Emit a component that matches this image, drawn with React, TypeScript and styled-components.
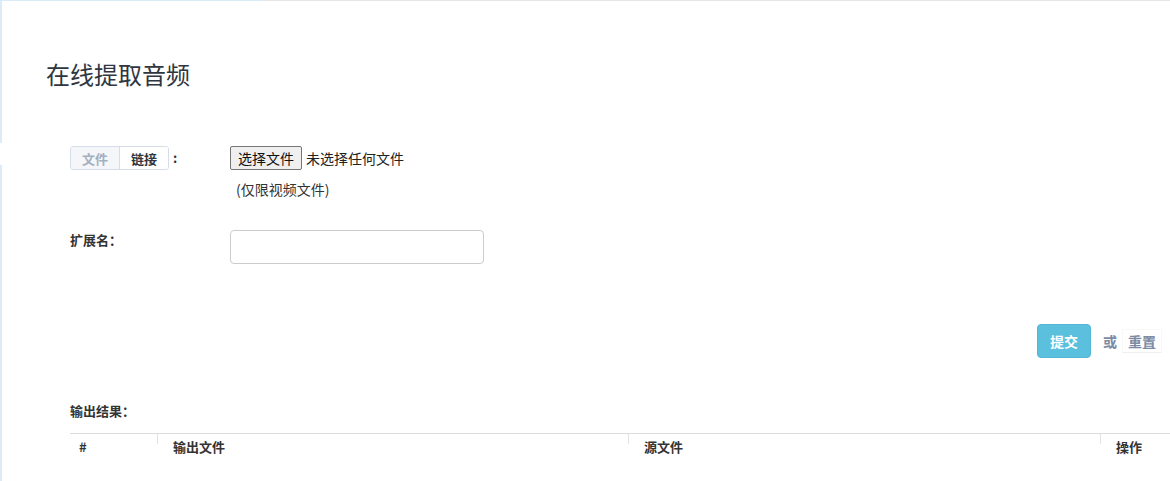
import React, { useState } from 'react';
import styled, { createGlobalStyle } from 'styled-components';

const FONT = `"Microsoft YaHei", "Noto Sans CJK SC", "Noto Sans", sans-serif`;
const TEXT = '#333';
const MUTED = '#7b8ba3';
const LINE = '#dddddd';

const GlobalStyle = createGlobalStyle`
  html, body {
    margin: 0;
    padding: 0;
    background: #fff;
    font-family: ${FONT};
    font-size: 13px;
    color: ${TEXT};
  }
`;

const Page = styled.div`
  box-sizing: border-box;
  width: 1170px;
  min-height: 481px;
  padding-top: 57px;
  background:
    linear-gradient(to right, #d9ebf7 0 264px, #e6e6e6 264px) top left / 100% 1px no-repeat,
    linear-gradient(to bottom, #dcebf6 0 143px, transparent 143px 165px, #dcebf6 165px) top left / 2px 100% no-repeat;
`;

const Title = styled.h1`
  margin: 0 0 55px 46px;
  font-size: 24px;
  line-height: 34px;
  font-weight: normal;
  color: #2f3640;
`;

const Form = styled.div`
  padding-left: 70px;
`;

const Row = styled.div<{ gap?: number }>`
  display: flex;
  align-items: flex-start;
  margin-bottom: ${({ gap }) => gap ?? 0}px;
`;

const Label = styled.div`
  width: 160px;
  flex: none;
  display: flex;
  align-items: center;
  font-weight: bold;
  line-height: 18px;
`;

const Field = styled.div`
  display: flex;
  flex-direction: column;
`;

const Toggle = styled.div`
  display: flex;
  border: 1px solid #d5dde8;
  border-radius: 3px;
  overflow: hidden;
  height: 22px;
`;

const ToggleItem = styled.button<{ active: boolean }>`
  font-family: ${FONT};
  font-size: 13px;
  font-weight: bold;
  border: none;
  padding: 0 11px;
  background: ${({ active }) => (active ? '#f4f6f9' : '#fff')};
  color: ${({ active }) => (active ? '#a4afbf' : '#2e3540')};
  cursor: pointer;
  & + & {
    border-left: 1px solid #d5dde8;
  }
`;

const Colon = styled.span`
  margin-left: 4px;
  font-weight: bold;
`;

const FileLine = styled.div`
  display: flex;
  align-items: center;
  height: 24px;
`;

const FileButton = styled.button`
  font-family: ${FONT};
  font-size: 14px;
  color: #111;
  height: 24px;
  padding: 0 7px;
  background: #efefef;
  border: 1px solid #767676;
  border-radius: 2px;
`;

const FileName = styled.span`
  margin-left: 4px;
  font-size: 14px;
  color: #222;
`;

const Hint = styled.div`
  margin-top: 9px;
  padding-left: 6px;
  font-size: 14px;
  line-height: 20px;
  color: #333;
`;

const TextInput = styled.input`
  box-sizing: border-box;
  width: 254px;
  height: 34px;
  margin-top: -1px;
  border: 1px solid #cccccc;
  border-radius: 4px;
  padding: 6px 12px;
  font-family: ${FONT};
  font-size: 13px;
  outline: none;
`;

const Actions = styled.div`
  display: flex;
  justify-content: flex-end;
  align-items: center;
  padding-right: 8px;
  margin: 60px 0 44px;
  font-size: 14px;
`;

const Submit = styled.button`
  font-family: ${FONT};
  font-size: 14px;
  font-weight: bold;
  color: #fff;
  background: #5bc0de;
  border: 1px solid #52b6d6;
  border-radius: 4px;
  height: 34px;
  padding: 0 12px;
`;

const Or = styled.span`
  margin: 0 5px 0 12px;
  color: ${MUTED};
  font-weight: bold;
`;

const Reset = styled.a`
  padding: 1px 5px;
  border: 1px solid #f8f8f8;
  border-bottom-color: #eef0f3;
  color: ${MUTED};
  font-weight: bold;
  cursor: pointer;
`;

const SectionLabel = styled.div`
  font-weight: bold;
  line-height: 18px;
  margin-bottom: 13px;
`;

const TableHead = styled.div`
  display: grid;
  grid-template-columns: 87px 471px 472px 1fr;
  border-top: 1px solid ${LINE};
`;

const HeadCell = styled.div<{ pad: number; divider?: boolean }>`
  position: relative;
  padding: 4px 0 0 ${({ pad }) => pad}px;
  font-weight: bold;
  line-height: 18px;
  color: #333;
  &::before {
    content: '';
    display: ${({ divider }) => (divider ? 'block' : 'none')};
    position: absolute;
    left: 0;
    top: 0;
    width: 1px;
    height: 10px;
    background: #e3e3e3;
  }
`;

export default function App() {
  const [mode, setMode] = useState<'file' | 'link'>('file');
  const [ext, setExt] = useState('');

  return (
    <>
      <GlobalStyle />
      <Page>
        <Title>在线提取音频</Title>
        <Form>
          <Row gap={32}>
            <Label>
              <Toggle>
                <ToggleItem active={mode === 'file'} onClick={() => setMode('file')}>
                  文件
                </ToggleItem>
                <ToggleItem active={mode === 'link'} onClick={() => setMode('link')}>
                  链接
                </ToggleItem>
              </Toggle>
              <Colon>:</Colon>
            </Label>
            <Field>
              <FileLine>
                <FileButton>选择文件</FileButton>
                <FileName>未选择任何文件</FileName>
              </FileLine>
              <Hint>(仅限视频文件)</Hint>
            </Field>
          </Row>
          <Row>
            <Label>扩展名：</Label>
            <TextInput value={ext} onChange={e => setExt(e.target.value)} />
          </Row>
          <Actions>
            <Submit>提交</Submit>
            <Or>或</Or>
            <Reset onClick={() => setExt('')}>重置</Reset>
          </Actions>
          <SectionLabel>输出结果：</SectionLabel>
          <TableHead>
            <HeadCell pad={9}>#</HeadCell>
            <HeadCell pad={16} divider>
              输出文件
            </HeadCell>
            <HeadCell pad={16} divider>
              源文件
            </HeadCell>
            <HeadCell pad={16} divider>
              操作
            </HeadCell>
          </TableHead>
        </Form>
      </Page>
    </>
  );
}
